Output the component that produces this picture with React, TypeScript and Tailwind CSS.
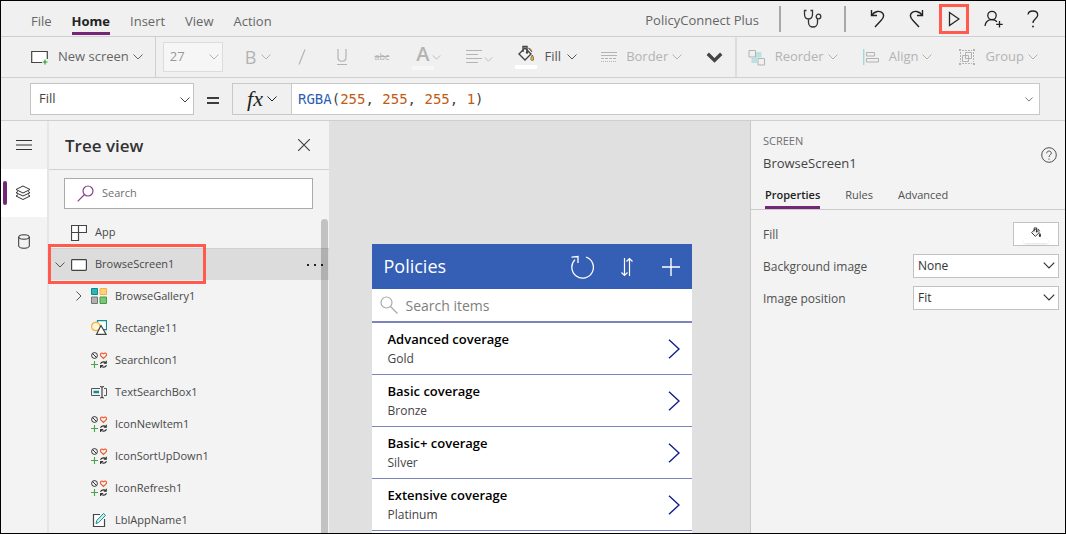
import { useState } from "react";
import type { ReactNode } from "react";

const FONT = "font-['Open_Sans','Noto_Sans',sans-serif]";

function Chevron({ className = "w-[10px] h-[6px]", weight = 1 }: { className?: string; weight?: number }) {
  return (
    <svg viewBox="0 0 10 6" className={`shrink-0 overflow-visible ${className}`} fill="none" stroke="currentColor" strokeWidth={weight} aria-hidden="true">
      <path d="M0.5 0.5 5 5 9.5 0.5" />
    </svg>
  );
}

function Icon({ children, className = "size-4", box = "0 0 16 16" }: { children: ReactNode; className?: string; box?: string }) {
  return (
    <svg viewBox={box} className={`shrink-0 ${className}`} fill="none" stroke="currentColor" strokeWidth="1" aria-hidden="true">
      {children}
    </svg>
  );
}

function Bucket({ className, accent }: { className: string; accent: string }) {
  return (
    <Icon className={className}>
      <path d="M1 9 7 3l6 6-6 6z" fill="#f4f4f4" strokeWidth="1.4" />
      <path d="M5 7V1.500h4V8" strokeWidth="1.400" />
      <circle cx="9" cy="7.500" r="1.200" fill="currentColor" stroke="none" />
      <path d="M10.500 3q3 .500 3.500 4l-3-3zM14.300 10c2 3 2 5.500 0 5.500s-2-2.500 0-5.500z" fill={accent} stroke="currentColor" strokeWidth=".6" />
    </Icon>
  );
}

/* ---------- menu bar ---------- */

function MenuBar() {
  return (
    <header className="flex h-9 shrink-0 items-center justify-between border-b border-[#cfcfcf] pr-[26px] pl-[30px]">
      <nav className="flex h-full gap-5 pt-[9px] text-[13px] leading-[22px] text-[#666]">
        <a href="#file" className="h-[25px]">File</a>
        <a href="#home" className="h-[25px] border-b-3 border-[#742774] font-bold text-[#222]">Home</a>
        <a href="#insert" className="h-[25px]">Insert</a>
        <a href="#view" className="h-[25px]">View</a>
        <a href="#action" className="h-[25px]">Action</a>
      </nav>
      <div className="flex h-full items-center text-[#222]">
        <span className="mr-5 pt-1 text-[13px] text-[#666]">PolicyConnect Plus</span>
        <span className="h-[26px] w-0.5 bg-[#a8a8a8]" />
        <button aria-label="App checker" className="mx-[22px] text-[#333]">
          <Icon className="h-5 w-[19px]" box="0 0 19 20">
            <path d="M3.500 1.500H1.500V5c0 3 1.500 5 4 5s4-2 4-5V1.500H7.500M5.500 10v3.500a4.500 4.500 0 0 0 9 0V10" strokeWidth="1.300" />
            <circle cx="15.500" cy="7.500" r="2.300" strokeWidth="1.300" />
          </Icon>
        </button>
        <span className="h-[26px] w-0.5 bg-[#a8a8a8]" />
        <button aria-label="Undo" className="ml-6">
          <Icon className="h-[19px] w-4" box="0 0 16 19">
            <path d="M1.500 1v5.500H7M1.800 6.200C4.500 2.200 10 1 12.700 4.300c2.300 3-.2 5.700-1.700 7.200l-6 6.500" strokeWidth="1.400" />
          </Icon>
        </button>
        <button aria-label="Redo" className="ml-[22px]">
          <Icon className="h-[19px] w-4" box="0 0 16 19">
            <path d="M14.500 1v5.500H9M14.200 6.200C11.500 2.200 6 1 3.300 4.300c-2.300 3 .2 5.700 1.700 7.200l6 6.500" strokeWidth="1.400" />
          </Icon>
        </button>
        <button aria-label="Preview the app" className="ml-[15px] flex h-[30px] w-[30px] items-center justify-center border-[3px] border-[#ff5a4d]">
          <Icon className="h-4 w-3" box="0 0 12 16">
            <path d="M1.500 1.500 11 8l-9.500 6.500z" strokeWidth="1.300" />
          </Icon>
        </button>
        <button aria-label="Share" className="ml-[15px]">
          <Icon className="h-[18px] w-[19px]" box="0 0 19 18">
            <circle cx="8" cy="5.500" r="4.200" strokeWidth="1.300" />
            <path d="M1 16c.5-4 3.500-6.300 7-6.300 2 0 3.800.8 5 2M15.500 11v6.500M12.200 14.300h6.500" strokeWidth="1.300" />
          </Icon>
        </button>
        <button aria-label="Help" className="ml-6">
          <Icon className="h-[18px] w-3" box="0 0 12 18">
            <path d="M1 4.500C1.300 2.300 3.300 1 5.800 1c3 0 4.900 1.600 4.900 4 0 3.700-4.700 4-4.700 8" strokeWidth="1.300" />
            <circle cx="6" cy="16.500" r=".9" fill="currentColor" stroke="none" />
          </Icon>
        </button>
      </div>
    </header>
  );
}

/* ---------- toolbar ---------- */

function Toolbar() {
  return (
    <div className="flex h-[41px] shrink-0 items-center justify-between border-b border-[#cfcfcf] pr-[27px] pl-[30px] text-[13px] text-[#b3b3b3]">
      <div className="flex h-full items-center">
        <button className="flex h-full items-center text-[#666]">
          <Icon className="mr-[9px] h-[15px] w-[18px] text-[#444]" box="0 0 18 15">
            <path d="M11 12.500H.7V1.500h15.600V9" fill="white" strokeWidth="1.200" />
            <path d="M14 9.500v5M11.500 12h5" stroke="#2ca02c" strokeWidth="1.200" />
          </Icon>
          New screen
          <Chevron className="ml-1 h-1.5 w-2.5" />
        </button>
        <span className="ml-3 h-full w-px bg-[#cfcfcf]" />
        <div className="relative ml-[7px]">
          <select aria-label="Font size" disabled className="h-[30px] w-[60px] appearance-none border border-[#dcdcdc] bg-[#f6f6f6] pl-1.5 text-[13px] text-[#999] opacity-100">
            <option>27</option>
          </select>
          <Chevron className="pointer-events-none absolute top-3 right-1 h-1.5 w-2.5" />
        </div>
        <button disabled aria-label="Bold" className="ml-[22px] flex items-center gap-1">
          <span className="text-[18px]">B</span>
          <Chevron />
        </button>
        <button disabled aria-label="Italic" className="ml-[27px]">
          <Icon className="h-4 w-2" box="0 0 8 16"><path d="M7 0.500 1 15.500" strokeWidth="1.200" /></Icon>
        </button>
        <button disabled aria-label="Underline" className="ml-[30px]">
          <Icon className="h-4 w-3" box="0 0 12 16"><path d="M2 0v8.500c0 5 8 5 8 0V0M1 15.500h10" strokeWidth="1.200" /></Icon>
        </button>
        <button disabled aria-label="Strikethrough" className="ml-[27px] text-[9px] line-through">abc</button>
        <button disabled aria-label="Font color" className="ml-[23px] flex flex-col">
          <span className="flex h-[19px] items-center gap-0.5 pl-1">
            <span className="text-[20px] leading-[18px] font-semibold">A</span>
            <Chevron className="mt-1.5 h-[5px] w-[9px]" />
          </span>
          <span className="mt-0.5 h-1 w-[22px] bg-[#f7f7f7]" />
        </button>
        <button disabled aria-label="Text alignment" className="ml-[25px] flex items-center gap-0.5">
          <Icon><path d="M0 1.500h16M0 5.500h12M0 9.500h16M0 13.500h12" /></Icon>
          <Chevron className="mt-1 h-[5px] w-[9px]" />
        </button>
        <button className="ml-[22px] flex items-center text-[#555]">
          <span className="flex w-[22px] flex-col items-center gap-1">
            <Bucket className="size-4 text-[#444]" accent="#e6b422" />
            <span className="h-1 w-full bg-white" />
          </span>
          <span className="ml-2">Fill</span>
          <Chevron className="ml-1.5 h-1.5 w-2.5" />
        </button>
        <button disabled className="ml-6 flex items-center">
          <Icon className="mr-[9px] h-3 w-4" box="0 0 16 12">
            <path d="M0 1.500h16M0 4.500h16" />
            <path d="M0 7.500h16" strokeDasharray="3 1" />
            <path d="M0 10.500h16" strokeDasharray="1 1" />
          </Icon>
          Border
          <Chevron className="ml-1 h-1.5 w-2.5" />
        </button>
        <button aria-label="More formatting" className="ml-[25px] text-[#444]">
          <Chevron className="h-[9px] w-[15px]" weight={2.2} />
        </button>
      </div>
      <div className="flex h-full items-center">
        <span className="mr-[11px] h-full w-0.5 bg-[#dcdcdc]" />
        <button disabled className="flex items-center">
          <Icon className="mr-[10px] size-[17px]" box="0 0 17 17">
            <path d="M7.500 3h6v5.500H9V14H3.500V9h4z" fill="#b9e3e0" stroke="none" />
            <path d="M1 1.500h6.500V8H1zM10 9.500h6.500V16H10z" fill="#f0f0f0" />
          </Icon>
          Reorder
          <Chevron className="ml-1 h-1.5 w-2.5" />
        </button>
        <button disabled className="ml-[25px] flex items-center">
          <Icon className="mr-2.5 h-4 w-4">
            <path d="M.7 0v16" stroke="#9fdad8" strokeWidth="1.400" />
            <path d="M3.500 3.500h8V7h-8zM3.500 9.500h12V13h-12z" />
          </Icon>
          Align
          <Chevron className="ml-1 h-1.5 w-2.5" />
        </button>
        <button disabled className="ml-[27px] flex items-center">
          <Icon className="mr-[10px] size-4">
            <path d="M3 1.500h10M3 14.500h10M1.500 3v10M14.500 3v10" strokeDasharray="2 1" />
            <path d="M3.500 6.500h6v6h-6zM6.500 3.500h6v6h-6z" />
            <path d="M0 0h2v2H0zM14 0h2v2h-2zM0 14h2v2H0zM14 14h2v2h-2z" fill="currentColor" stroke="none" />
          </Icon>
          Group
          <Chevron className="ml-1 h-1.5 w-2.5" />
        </button>
      </div>
    </div>
  );
}

/* ---------- formula bar ---------- */

function colorOf(token: string) {
  if (/^\d/.test(token)) return "text-[#c05a14]";
  if (/^[A-Za-z]/.test(token)) return "text-[#2b5fb4]";
  return "text-[#444]";
}

function FormulaBar() {
  const [formula, setFormula] = useState("RGBA(255, 255, 255, 1)");
  const tokens = formula.match(/[A-Za-z]+|\d+|[^A-Za-z\d]+/g) ?? [];
  return (
    <div className="flex h-[43px] shrink-0 items-center border-b border-[#cfcfcf] pr-[25px] pl-[29px]">
      <div className="relative">
        <select aria-label="Property" className="h-8 w-[164px] appearance-none border border-[#c4c4c4] bg-white pl-2 text-[13px] text-[#444]">
          <option>Fill</option>
          <option>Height</option>
          <option>Width</option>
        </select>
        <Chevron className="pointer-events-none absolute top-3.5 right-1 h-1.5 w-2.5 text-[#444]" />
      </div>
      <span className="flex w-[38px] justify-center" aria-label="equals">
        <Icon className="mt-1 h-2 w-3 text-black" box="0 0 12 8"><path d="M0 1h12M0 6h12" strokeWidth="1.600" /></Icon>
      </span>
      <div className="flex h-8 min-w-0 grow border border-[#c8c8c8] bg-white">
        <button aria-label="Insert function" className="flex w-[59px] shrink-0 items-center justify-center gap-1 border-r border-[#c8c8c8] bg-[#f0f0f0] text-[#222]">
          <span className="font-['Liberation_Serif',serif] text-[22px] leading-5 italic">fx</span>
          <Chevron className="h-1.5 w-2.5" />
        </button>
        <div className="relative min-w-0 grow font-['DejaVu_Sans_Mono',monospace] text-[14px] leading-[30px]">
          <div aria-hidden="true" className="pl-1.5 whitespace-pre">
            {tokens.map((t, i) => (
              <span key={i} className={colorOf(t)}>{t}</span>
            ))}
          </div>
          <input
            aria-label="Formula"
            value={formula}
            onChange={(e) => setFormula(e.target.value)}
            className="absolute inset-0 w-full bg-transparent pl-1.5 text-transparent caret-black outline-none"
          />
        </div>
        <button aria-label="Expand formula bar" className="w-5 shrink-0 text-[#555]">
          <Chevron className="mx-auto h-[5px] w-2" />
        </button>
      </div>
    </div>
  );
}

/* ---------- left rail ---------- */

function Rail() {
  return (
    <nav aria-label="Panels" className="flex w-[48px] shrink-0 flex-col border-r-2 border-[#e6e6e6] text-[#333]">
      <button aria-label="Menu" className="flex h-12 items-center justify-center">
        <Icon className="h-3 w-4" box="0 0 16 12"><path d="M0 1.500h16M0 6h16M0 10.500h16" /></Icon>
      </button>
      <button aria-label="Tree view" className="flex h-12 items-center bg-white pl-0.5">
        <span className="mr-2 h-6 w-1 rounded-sm bg-[#742774]" />
        <Icon className="h-4 w-4">
          <path d="M8 1 15 4.500 8 8 1 4.500zM3 6.500 1 7.700 8 11l7-3.300-2-1.200M3 9.700 1 11l7 3.500L15 11l-2-1.300" />
        </Icon>
      </button>
      <button aria-label="Data" className="flex h-12 items-center justify-center">
        <Icon className="h-[15px] w-3" box="0 0 12 15">
          <ellipse cx="6" cy="3" rx="5.300" ry="2.200" />
          <path d="M.7 3v9c0 3 10.600 3 10.600 0V3" />
        </Icon>
      </button>
    </nav>
  );
}

/* ---------- tree view ---------- */

const GalleryIcon = () => (
  <Icon>
    <path d="M.5.500h6v6h-6z" fill="#2bb5b5" stroke="#0d8a8a" />
    <path d="M9 .500h6.500v6H9z" fill="#ffd080" stroke="#f5b23c" />
    <path d="M.5 9h6v6.500h-6z" fill="#b0b0b0" stroke="#767676" />
    <path d="M9 9h6.500v6.500H9z" fill="#7cc47c" stroke="#3fa03f" />
  </Icon>
);

const ShapeIcon = () => (
  <Icon>
    <path d="M6.500.700h9v9h-9z" fill="white" stroke="#0d8f8f" strokeWidth="1.200" />
    <circle cx="4.800" cy="6.500" r="4.200" fill="#fff6dd" stroke="#f2b134" strokeWidth="1.200" />
    <path d="M10 5.500 15 14.300H5.500z" fill="white" stroke="#444" strokeWidth="1.200" />
  </Icon>
);

const IconIcon = () => (
  <Icon>
    <circle cx="3.500" cy="3.500" r="2.900" stroke="#333" />
    <path d="M1.500 1.500l4 4" stroke="#333" />
    <path d="M12.500 6.500 9.700 3.700c-.8-1.500.3-2.900 1.500-2.700l1.300.9 1.300-.9c1.200-.2 2.300 1.200 1.500 2.700z" stroke="#f0582c" strokeWidth="1.100" />
    <path d="M3.500 9v7M0 12.500h7" stroke="#4aa34a" strokeWidth="1.100" />
    <path d="M9.500 11.800c.8-2.300 4.200-2.600 5.500-.8M15.300 8.800v2.500h-2.600M15.500 13.200c-.8 2.300-4.200 2.600-5.500.8M9.600 16v-2.500h2.600" stroke="#333" strokeWidth="1.100" />
  </Icon>
);

const InputIcon = () => (
  <Icon>
    <path d="M9 4.500H.5v7H9M13 4.500h2.500v7H13" stroke="#555" />
    <path d="M2.500 8h5.500" stroke="#0d8f8f" strokeWidth="2.500" />
    <path d="M9 2.500q1.500 0 2 1 .5-1 2-1M11 3.500v9.500M9 14q1.500 0 2-1 .5 1 2 1" stroke="#444" strokeWidth="1.200" />
  </Icon>
);

const LabelIcon = () => (
  <Icon>
    <path d="M9 2.500H2.500v12h11V7" fill="white" stroke="#444" strokeWidth="1.200" />
    <path d="m5 11.500.8-3L12.500 1.500l2 1.800-6.800 7.200z" fill="#d5f1f1" stroke="#0d8f8f" />
  </Icon>
);

const children = [
  { name: "BrowseGallery1", icon: <GalleryIcon />, open: true },
  { name: "Rectangle11", icon: <ShapeIcon /> },
  { name: "SearchIcon1", icon: <IconIcon /> },
  { name: "TextSearchBox1", icon: <InputIcon /> },
  { name: "IconNewItem1", icon: <IconIcon /> },
  { name: "IconSortUpDown1", icon: <IconIcon /> },
  { name: "IconRefresh1", icon: <IconIcon /> },
  { name: "LblAppName1", icon: <LabelIcon /> },
];

function TreeView() {
  return (
    <section aria-label="Tree view" className="flex w-[280px] shrink-0 flex-col">
      <div className="flex h-[49px] shrink-0 items-center justify-between border-b border-[#d2d2d2] pr-[19px] pl-4">
        <h2 className="pt-0.5 text-[17px] font-semibold text-[#333]">Tree view</h2>
        <button aria-label="Close" className="text-[#444]">
          <Icon className="size-3" box="0 0 12 12"><path d="M0 0 12 12M12 0 0 12" strokeWidth="1.200" /></Icon>
        </button>
      </div>
      <label className="mt-2 mr-4 ml-[15px] flex h-[31px] shrink-0 items-center border border-[#aaa] bg-white pl-3">
        <Icon className="mr-2 size-[17px] text-[#8a4090]" box="0 0 17 17">
          <circle cx="11" cy="6" r="5" strokeWidth="1.200" />
          <path d="M7.500 9.500.7 16.300" strokeWidth="1.200" />
        </Icon>
        <input aria-label="Search" placeholder="Search" className="w-full min-w-0 bg-transparent text-[11px] outline-none placeholder:text-[#707070]" />
      </label>
      <div className="relative mt-2 text-[11px] text-[#484848]">
        <div className="flex h-[31px] items-center pl-[22px]">
          <Icon className="mr-2 size-4 text-[#444]">
            <path d="M.5.500h7v7h-7zM7.500.500h8v7h-8zM.5 7.500h7v8h-7z" fill="white" strokeWidth="1.200" />
          </Icon>
          App
        </div>
        <div className="relative flex h-8 items-center border-t border-[#d0d0d0] bg-[#dcdcdc] pr-1.5 pl-1.5">
          <Chevron className="mr-1.5 h-1.5 w-2.5 text-[#555]" />
          <Icon className="mr-2 h-3 w-4 text-[#444]" box="0 0 16 12">
            <rect x=".6" y=".6" width="14.800" height="10.800" rx=".8" fill="white" strokeWidth="1.200" />
          </Icon>
          BrowseScreen1
          <button aria-label="More options" className="ml-auto text-[#222]">
            <Icon className="h-1 w-4" box="0 0 16 4">
              <path d="M0 1h2v2H0zM7 1h2v2H7zM14 1h2v2h-2z" fill="currentColor" stroke="none" />
            </Icon>
          </button>
          <span className="pointer-events-none absolute -top-[5px] -left-px h-10 w-[158px] border-[3px] border-[#ff5a4d]" />
        </div>
        <ul>
          {children.map((c) => (
            <li key={c.name} className="flex h-8 items-center pl-[27px]">
              <span className="mr-1.5 flex w-[9px]">
                {c.open && (
                  <Icon className="h-2.5 w-1.5 text-[#555]" box="0 0 6 10"><path d="M.5.500 5 5 .5 9.500" /></Icon>
                )}
              </span>
              <span className="mr-2 flex">{c.icon}</span>
              {c.name}
            </li>
          ))}
        </ul>
        <span className="absolute top-0.5 right-px bottom-0 w-[7px] rounded-t-full bg-black/20" />
      </div>
    </section>
  );
}

/* ---------- canvas ---------- */

const policies = [
  ["Advanced coverage", "Gold"],
  ["Basic coverage", "Bronze"],
  ["Basic+ coverage", "Silver"],
  ["Extensive coverage", "Platinum"],
];

function Canvas() {
  return (
    <main className="flex min-w-0 grow justify-center bg-[#e0e0e0] pt-[123px] pr-4">
      <div className="w-[320px] shrink-0 bg-white">
        <div className="flex h-[45px] items-center bg-[#355eb5] px-3 text-white">
          <h1 className="grow text-[18px]">Policies</h1>
          <button aria-label="Refresh">
            <Icon className="size-6" box="0 0 24 24">
              <path d="M5 4.600A10.800 10.800 0 1 0 16 2M1.500 2.200 8 1.500V8" strokeWidth="1.300" />
            </Icon>
          </button>
          <button aria-label="Sort" className="ml-[27px]">
            <Icon className="h-5 w-3" box="0 0 12 20">
              <path d="M3.500 1v17.500M.5 15.500l3 3 3-3M8.500 19V1.500M5.500 4.500l3-3 3 3" strokeWidth="1.200" />
            </Icon>
          </button>
          <button aria-label="New item" className="ml-[29px]">
            <Icon className="size-[18px]" box="0 0 18 18"><path d="M9 0v18M0 9h18" strokeWidth="1.400" /></Icon>
          </button>
        </div>
        <label className="flex h-[34px] items-center border-b-2 border-[#7b84bd] pl-2">
          <Icon className="mr-2 size-[18px] text-[#aaa]" box="0 0 18 18">
            <circle cx="6.500" cy="6.500" r="5.500" strokeWidth="1.200" />
            <path d="m10.500 10.500 7 7" strokeWidth="1.200" />
          </Icon>
          <input aria-label="Search items" placeholder="Search items" className="w-full min-w-0 bg-transparent text-[14px] outline-none placeholder:text-[#808080]" />
        </label>
        <ul>
          {policies.map(([title, level]) => (
            <li key={title} className="flex h-[52px] items-center justify-between border-b border-[#7b84bd] pr-3 pl-4">
              <div>
                <p className="text-[13px] leading-5 font-semibold text-black">{title}</p>
                <p className="text-[12px] leading-5 text-[#444]">{level}</p>
              </div>
              <button aria-label={`Open ${title}`} className="text-[#10208a]">
                <Icon className="h-5 w-3" box="0 0 12 20"><path d="m1 .700 10 9.300L1 19.300" strokeWidth="1.400" /></Icon>
              </button>
            </li>
          ))}
        </ul>
      </div>
    </main>
  );
}

/* ---------- properties ---------- */

function Field({ id, label, value }: { id: string; label: string; value: string }) {
  return (
    <div className="flex h-8 items-center justify-between">
      <label htmlFor={id} className="pt-0.5">{label}</label>
      <div className="relative">
        <select id={id} className="block h-6 w-[146px] appearance-none border border-[#c2c2c2] bg-white pl-1 text-[12px] text-[#333]">
          <option>{value}</option>
        </select>
        <Chevron className="pointer-events-none absolute top-2 right-1 h-[7px] w-3 text-[#333]" />
      </div>
    </div>
  );
}

function Properties() {
  return (
    <aside className="w-[315px] shrink-0 border-l border-[#c8c8c8] text-[12px] text-[#505050]">
      <div className="flex items-center justify-between pt-3 pr-2 pl-3">
        <div>
          <p className="text-[11px] leading-4 text-[#707070]">SCREEN</p>
          <p className="mt-1 text-[13px] leading-5 text-[#444]">BrowseScreen1</p>
        </div>
        <button aria-label="Help" className="mt-1">
          <Icon>
            <circle cx="8" cy="8" r="7.300" />
            <path d="M5.700 6.300c0-3 4.600-3 4.600-.2C10.300 7.800 8 8 8 10M8 11.500v1.200" />
          </Icon>
        </button>
      </div>
      <div role="tablist" className="mt-2.5 flex h-[27px] gap-[25px] border-b border-[#cacaca] pl-3.5 text-[11px] leading-[22px]">
        <button role="tab" aria-selected="true" className="border-b-3 border-[#742774] font-semibold text-[#222]">Properties</button>
        <button role="tab" aria-selected="false" className="border-b-3 border-transparent">Rules</button>
        <button role="tab" aria-selected="false" className="border-b-3 border-transparent">Advanced</button>
      </div>
      <div className="pt-2 pr-1.5 pl-3">
        <div className="flex h-8 items-center justify-between">
          <span id="fill" className="pt-0.5">Fill</span>
          <button aria-labelledby="fill" className="flex h-6 w-[46px] flex-col items-center border border-[#c2c2c2] bg-white pt-1">
            <Bucket className="size-2.5 text-[#222]" accent="#222222" />
            <span className="mt-0.5 h-1 w-6 bg-white shadow-sm" />
          </button>
        </div>
        <Field id="bg" label="Background image" value="None" />
        <Field id="pos" label="Image position" value="Fit" />
      </div>
    </aside>
  );
}

export default function App() {
  return (
    <div className={`flex h-screen flex-col overflow-hidden border border-black bg-[#f0f0f0] ${FONT}`}>
      <MenuBar />
      <Toolbar />
      <FormulaBar />
      <div className="flex min-h-0 grow bg-[#f3f3f3]">
        <Rail />
        <TreeView />
        <Canvas />
        <Properties />
      </div>
    </div>
  );
}
